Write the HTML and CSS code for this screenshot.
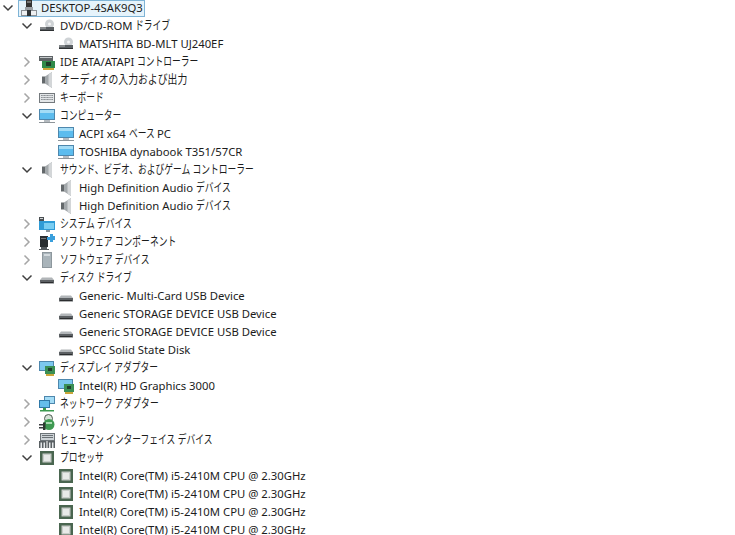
FILE: index.html
```html
<!DOCTYPE html>
<html lang="ja">
<head>
    <meta charset="UTF-8">
    <title>デバイス マネージャー</title>
    <link rel="stylesheet" href="styles.css">
</head>
<body>
    <svg class="sprite" xmlns="http://www.w3.org/2000/svg">
        <symbol id="i-open" viewBox="0 0 12 12"><path d="M1.5 3.500 6 8l4.500-4.500" fill="none" stroke="#404040" stroke-width="1.500"/></symbol>
        <symbol id="i-closed" viewBox="0 0 12 12"><path d="M3.500 1.500 8 6l-4.500 4.500" fill="none" stroke="#a6a6a6" stroke-width="1.500"/></symbol>
        <symbol id="i-root" viewBox="0 0 16 16"><path d="M5 0h6v7H5z" fill="#333"/><path d="M6 1h4v2H6z" fill="#777"/><path d="M4 7h8v3H4z" fill="#9aa0a6"/><path d="M0 10h16v6H0z" fill="#8b9096"/><path d="M1 11h5v4H1zM10 11h5v4h-5z" fill="#eef0f2"/><path d="M6 10h4v6H6z" fill="#2f3336"/></symbol>
        <symbol id="i-dvd" viewBox="0 0 16 16"><circle cx="10.500" cy="6" r="4.500" fill="#cfd3d6"/><circle cx="10.500" cy="6" r="1.500" fill="#f5f6f7"/><path d="M1 9h14v3.500H1z" fill="#5a5f63"/><path d="M1 12h14v1H1z" fill="#2e3133"/><path d="M1 9h6v2H1z" fill="#85898c"/></symbol>
        <symbol id="i-ide" viewBox="0 0 16 16"><path d="M0 2h14v5H0z" fill="#5f6467"/><path d="M1 3h12v1H1z" fill="#c5c9cb"/><path d="M3 7h13v7H3z" fill="#2f8a4a"/><path d="M7 8h5v4H7z" fill="#1f3d2a"/><path d="M4 14h11v2H4z" fill="#c9a63a"/></symbol>
        <symbol id="i-audio" viewBox="0 0 16 16"><path d="M3 4.500h3.500v7H3z" fill="#63686b"/><path d="M6 4.500 13 0v16l-7-4.500z" fill="#a3a8ab"/><path d="M9.500 2.500 13 0v16l-3.500-2.500z" fill="#d3d6d8"/></symbol>
        <symbol id="i-keyboard" viewBox="0 0 16 16"><path d="M0 3h16v10H0z" fill="#74797d"/><path d="M1 4h14v8H1z" fill="#e3e6e8"/><path d="M2 5h12v1H2zM2 7h12v1H2zM2 9h12v1H2z" fill="#8d9296"/><path d="M4 5v5M7 5v5M10 5v5M12 5v5" stroke="#e3e6e8" stroke-width=".6"/></symbol>
        <symbol id="i-monitor" viewBox="0 0 16 16"><path d="M0 1h16v11H0z" fill="#4e87ad"/><path d="M1 2h14v9H1z" fill="#5cbcee"/><path d="M1 2h14v3H1z" fill="#a3dcf6"/><path d="M5 12h6v2H5z" fill="#b5bbc0"/><path d="M0 14h16v1H0z" fill="#8d9499"/></symbol>
        <symbol id="i-system" viewBox="0 0 16 16"><path d="M0 1h5v6H0z" fill="#4a4f52"/><path d="M1 2h3v1H1z" fill="#cfd3d5"/><path d="M0 5h16v9H0z" fill="#2f9bd6"/><path d="M5 7h10v6H5z" fill="#79cdf2"/><path d="M7 14h4v2H7z" fill="#8d9499"/></symbol>
        <symbol id="i-component" viewBox="0 0 16 16"><path d="M1 2h8v11H1z" fill="#2b2e30"/><path d="M2 4h5v1H2z" fill="#777"/><path d="M2 13h6v2H2zM0 15h10v1H0z" fill="#55595c"/><path d="M8 3h3V0h3v2h2v4h-2v2h-3V6H8z" fill="#3a9fdc"/></symbol>
        <symbol id="i-softdev" viewBox="0 0 16 16"><path d="M3 0h10v16H3z" fill="#8d979d"/><path d="M4 1h8v14H4z" fill="#a9b4ba"/><path d="M5 2h6v2H5z" fill="#d3dade"/></symbol>
        <symbol id="i-hdd" viewBox="0 0 16 16"><path d="M3 7.500h10l2 2.500H1z" fill="#b1b5b8"/><path d="M1 10h14v3.500H1z" fill="#5c6063"/><path d="M2 12h12v1H2z" fill="#2b2d2f"/></symbol>
        <symbol id="i-display" viewBox="0 0 16 16"><path d="M0 1h15v10H0z" fill="#4e87ad"/><path d="M1 2h13v8H1z" fill="#7cc8ee"/><path d="M6 6h10v8H6z" fill="#3a8f55"/><path d="M9 8h4v3H9z" fill="#20402c"/><path d="M7 14h8v2H7z" fill="#c9a63a"/></symbol>
        <symbol id="i-network" viewBox="0 0 16 16"><path d="M5 0h11v8H5z" fill="#4e87ad"/><path d="M6 1h9v6H6z" fill="#a3dcf6"/><path d="M0 4h11v8H0z" fill="#2f79a8"/><path d="M1 5h9v6H1z" fill="#64bdeb"/><path d="M4 12h3v2H4z" fill="#3b9a4e"/><path d="M1 14h14v1.500H1z" fill="#3b9a4e"/></symbol>
        <symbol id="i-battery" viewBox="0 0 16 16"><circle cx="9.500" cy="4.500" r="4" fill="#d5e2d7" stroke="#4d5a50"/><circle cx="10" cy="10.500" r="5.500" fill="#3f9a52"/><path d="M7 8h6v2H7z" fill="#a9dcb2"/><path d="M0 10h5v1.500H0zM0 13h5v1.500H0z" fill="#3a3d3f"/><path d="M4 8.500h2.500V16H4z" fill="#2d3a30"/></symbol>
        <symbol id="i-hid" viewBox="0 0 16 16"><path d="M1 1h15v8H1z" fill="#6d7478"/><path d="M2 2h13v6H2z" fill="#cdd3d7"/><path d="M3 3h11v1H3zM3 5h11v1H3z" fill="#6a7175"/><path d="M0 9h7.500v7H0zM8.500 9H16v7H8.500z" fill="#5a6063"/><path d="M1.500 10.500h1.500V16H1.500zM4.500 10.500H6V16H4.500zM10 10.500h1.500V16H10zM13 10.500h1.500V16H13z" fill="#e4e7e9"/></symbol>
        <symbol id="i-cpu" viewBox="0 0 16 16"><path d="M1 1h14v14H1z" fill="#4a6650"/><path d="M3.500 3.500h9v9h-9z" fill="#c8cdc9"/><path d="M5 5h6v6H5z" fill="#e8eae8"/></symbol>
    </svg>

    <ul class="tree">
        <li class="row root"><svg class="chev"><use href="#i-open"/></svg><span class="selected"><svg class="icon"><use href="#i-root"/></svg>DESKTOP-4SAK9Q3</span></li>
        <li class="row lv1"><svg class="chev"><use href="#i-open"/></svg><svg class="icon"><use href="#i-dvd"/></svg><span>DVD/CD-ROM <span class="ja">ドライブ</span></span></li>
        <li class="row lv2"><svg class="icon"><use href="#i-dvd"/></svg><span>MATSHITA BD-MLT UJ240EF</span></li>
        <li class="row lv1"><svg class="chev"><use href="#i-closed"/></svg><svg class="icon"><use href="#i-ide"/></svg><span>IDE ATA/ATAPI <span class="ja">コントローラー</span></span></li>
        <li class="row lv1"><svg class="chev"><use href="#i-closed"/></svg><svg class="icon"><use href="#i-audio"/></svg><span class="ja wide">オーディオの入力および出力</span></li>
        <li class="row lv1"><svg class="chev"><use href="#i-closed"/></svg><svg class="icon"><use href="#i-keyboard"/></svg><span class="ja">キーボード</span></li>
        <li class="row lv1"><svg class="chev"><use href="#i-open"/></svg><svg class="icon"><use href="#i-monitor"/></svg><span class="ja">コンピューター</span></li>
        <li class="row lv2"><svg class="icon"><use href="#i-monitor"/></svg><span>ACPI x64 <span class="ja tight">ベース</span> PC</span></li>
        <li class="row lv2"><svg class="icon"><use href="#i-monitor"/></svg><span>TOSHIBA dynabook T351/57CR</span></li>
        <li class="row lv1"><svg class="chev"><use href="#i-open"/></svg><svg class="icon"><use href="#i-audio"/></svg><span class="ja">サウンド、ビデオ、およびゲーム コントローラー</span></li>
        <li class="row lv2"><svg class="icon"><use href="#i-audio"/></svg><span>High Definition Audio <span class="ja">デバイス</span></span></li>
        <li class="row lv2"><svg class="icon"><use href="#i-audio"/></svg><span>High Definition Audio <span class="ja">デバイス</span></span></li>
        <li class="row lv1"><svg class="chev"><use href="#i-closed"/></svg><svg class="icon"><use href="#i-system"/></svg><span class="ja">システム デバイス</span></li>
        <li class="row lv1"><svg class="chev"><use href="#i-closed"/></svg><svg class="icon"><use href="#i-component"/></svg><span class="ja">ソフトウェア コンポーネント</span></li>
        <li class="row lv1"><svg class="chev"><use href="#i-closed"/></svg><svg class="icon"><use href="#i-softdev"/></svg><span class="ja">ソフトウェア デバイス</span></li>
        <li class="row lv1"><svg class="chev"><use href="#i-open"/></svg><svg class="icon"><use href="#i-hdd"/></svg><span class="ja">ディスク ドライブ</span></li>
        <li class="row lv2"><svg class="icon"><use href="#i-hdd"/></svg><span>Generic- Multi-Card USB Device</span></li>
        <li class="row lv2"><svg class="icon"><use href="#i-hdd"/></svg><span>Generic STORAGE DEVICE USB Device</span></li>
        <li class="row lv2"><svg class="icon"><use href="#i-hdd"/></svg><span>Generic STORAGE DEVICE USB Device</span></li>
        <li class="row lv2"><svg class="icon"><use href="#i-hdd"/></svg><span>SPCC Solid State Disk</span></li>
        <li class="row lv1"><svg class="chev"><use href="#i-open"/></svg><svg class="icon"><use href="#i-display"/></svg><span class="ja">ディスプレイ アダプター</span></li>
        <li class="row lv2"><svg class="icon"><use href="#i-display"/></svg><span>Intel(R) HD Graphics 3000</span></li>
        <li class="row lv1"><svg class="chev"><use href="#i-closed"/></svg><svg class="icon"><use href="#i-network"/></svg><span class="ja">ネットワーク アダプター</span></li>
        <li class="row lv1"><svg class="chev"><use href="#i-closed"/></svg><svg class="icon"><use href="#i-battery"/></svg><span class="ja">バッテリ</span></li>
        <li class="row lv1"><svg class="chev"><use href="#i-closed"/></svg><svg class="icon"><use href="#i-hid"/></svg><span class="ja">ヒューマン インターフェイス デバイス</span></li>
        <li class="row lv1"><svg class="chev"><use href="#i-open"/></svg><svg class="icon"><use href="#i-cpu"/></svg><span class="ja">プロセッサ</span></li>
        <li class="row lv2"><svg class="icon"><use href="#i-cpu"/></svg><span>Intel(R) Core(TM) i5-2410M CPU @ 2.30GHz</span></li>
        <li class="row lv2"><svg class="icon"><use href="#i-cpu"/></svg><span>Intel(R) Core(TM) i5-2410M CPU @ 2.30GHz</span></li>
        <li class="row lv2"><svg class="icon"><use href="#i-cpu"/></svg><span>Intel(R) Core(TM) i5-2410M CPU @ 2.30GHz</span></li>
        <li class="row lv2"><svg class="icon"><use href="#i-cpu"/></svg><span>Intel(R) Core(TM) i5-2410M CPU @ 2.30GHz</span></li>
    </ul>
</body>
</html>
```

FILE: styles.css
```css
* { margin: 0; padding: 0; box-sizing: border-box; }
html, body { height: 100%; overflow: hidden; }
body {
    background: #fff;
    color: #1c1c1c;
    font-family: "Noto Sans", "Noto Sans CJK JP", sans-serif;
    font-size: 11.3px;
}
.sprite { display: none; }
.tree { list-style: none; margin-top: -1px; }
.row {
    display: flex;
    align-items: center;
    height: 18px;
    line-height: 16px;
    white-space: nowrap;
}
.chev { width: 12px; height: 12px; flex: none; margin-right: 6px; }
.icon { width: 16px; height: 16px; flex: none; margin-right: 5px; }
.root { padding-left: 2px; }
.lv1 { padding-left: 21px; }
.lv2 { padding-left: 58px; }
/* kana in the original font is much narrower than Noto CJK */
.ja {
    display: inline-block;
    font-size: 12px;
    transform: scaleX(0.73);
    transform-origin: left center;
}
.ja.wide { transform: scaleX(0.82); }
.ja.tight { margin-right: -10px; }
.selected {
    display: flex;
    align-items: center;
    flex: none;
    height: 17px;
    margin-left: -2px;
    padding-left: 2px;
    width: 127px;
    background: #e5f3fb;
    border: 1px solid #7fb4d6;
}
.selected .icon { margin-right: 4px; }
```
